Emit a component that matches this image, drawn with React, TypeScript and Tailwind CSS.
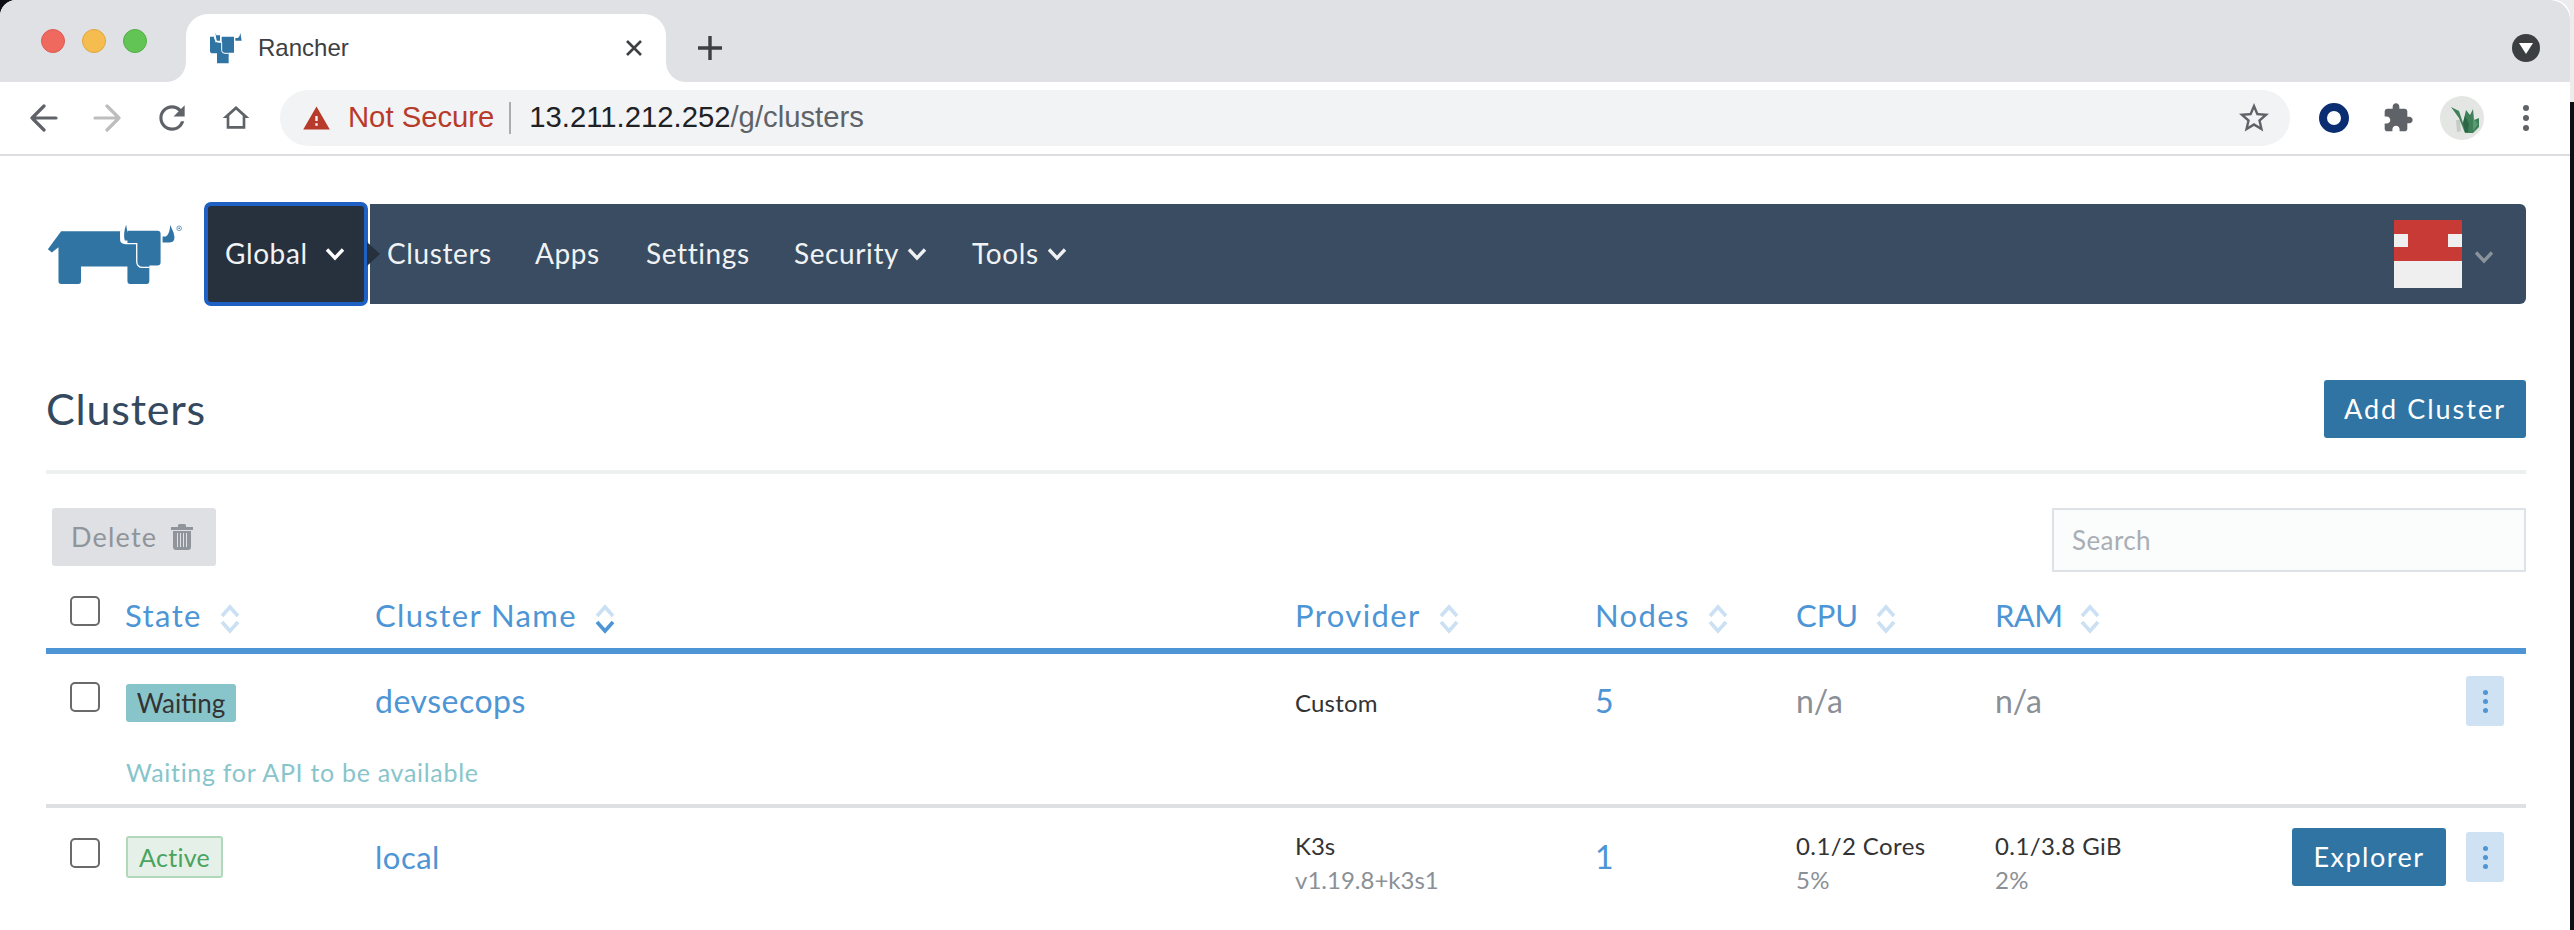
import React from "react";

const ROW = "grid grid-cols-[55px_250px_920px_300px_201px_199px_200px_1fr] pl-[24px] pr-[22px] items-center";

function Sort({ strong = false }: { strong?: boolean }) {
  return (
    <svg width="22" height="32" viewBox="0 0 22 32" fill="none" strokeWidth="3.6" className="mt-2 ml-[17px] shrink-0">
      <path d="M3 13 L11 4 L19 13" stroke="#cbe0f3" />
      <path d="M3 19 L11 28 L19 19" stroke={strong ? "#4d95d5" : "#cbe0f3"} />
    </svg>
  );
}

function Head({ label, strong, tracking = "tracking-[1.4px]" }: { label: string; strong?: boolean; tracking?: string }) {
  return (
    <div className={`flex items-center mb-2 text-[31px] leading-[36px] text-[#4d95d5] ${tracking}`}>
      <span>{label}</span>
      <Sort strong={strong} />
    </div>
  );
}

function Box({ className = "mb-2" }: { className?: string }) {
  return <div className={`w-[30px] h-[30px] rounded-[5px] border-2 border-[#6a6a6a] bg-white ${className}`} />;
}

function Kebab() {
  return (
    <button className="w-[38px] h-[50px] rounded-[3px] bg-[#cfe2f3] flex flex-col items-center justify-center gap-[4px] shrink-0">
      <span className="w-[5px] h-[5px] rounded-full bg-[#4d95d5]" />
      <span className="w-[5px] h-[5px] rounded-full bg-[#4d95d5]" />
      <span className="w-[5px] h-[5px] rounded-full bg-[#4d95d5]" />
    </button>
  );
}

function Chev({ color = "#eef0f2", w = 20 }: { color?: string; w?: number }) {
  return (
    <svg width={w} height="14" viewBox="0 0 20 14" fill="none" stroke={color} strokeWidth="3.4" className="shrink-0">
      <path d="M2 2.5 L10 11 L18 2.5" />
    </svg>
  );
}

function Cow() {
  return (
    <svg width="137" height="61" viewBox="50 100 412 184" className="shrink-0">
      <path fill="#3074a4" d="M92 122 H270 V150 Q272 160 284 160 H292 V120 H382 Q392 120 392 130 V215 Q392 225 382 225 H358 V272 Q358 281 350 281 H300 Q292 281 292 272 V228 H152 V272 Q152 281 144 281 H92 Q84 281 84 272 V170 L64 186 L52 176 Z" />
      <path fill="#3074a4" d="M288 102 Q278 130 284 150 H300 V125 H292 Z" />
      <path fill="none" stroke="#fff" strokeWidth="4" d="M272 124 Q270 158 286 159 H322 M320 160 V212 Q320 230 338 231 H358" />
      <path fill="#3074a4" d="M421 103 L431 126 Q440 155 420 156 H398 V138 H408 Q420 130 421 103 Z" />
      <circle cx="448" cy="113" r="7" fill="none" stroke="#3074a4" strokeWidth="2" />
      <circle cx="448" cy="113" r="2.5" fill="#3074a4" />
    </svg>
  );
}

function Favicon() {
  return (
    <svg width="32" height="32" viewBox="120 95 96 94" className="shrink-0">
      <path fill="#3074a4" d="M120 108 H135 L136 125 H155 V108 H192 V156 H176 V188 H141 V158 H128 Q120 158 120 150 Z" />
      <path fill="#3074a4" d="M136 96 L139 104 H150 V120 H140 Z" />
      <path fill="none" stroke="#fff" strokeWidth="3" d="M133 108 Q134 124 150 125 H156 M155 125 V150 Q155 158 165 158 H176" />
      <path fill="#3074a4" d="M211 96 L215 120 H196 V112 H204 Q210 108 211 96 Z" />
    </svg>
  );
}

function Mat({ d, size, color = "#5f6368", evenodd = false }: { d: string; size: number; color?: string; evenodd?: boolean }) {
  return (
    <svg width={size} height={size} viewBox="0 0 24 24" className="shrink-0">
      <path d={d} fill={color} fillRule={evenodd ? "evenodd" : "nonzero"} />
    </svg>
  );
}

function Arrow({ color, flip = false }: { color: string; flip?: boolean }) {
  return (
    <svg width="28" height="28" viewBox="0 0 28 28" fill="none" stroke={color} strokeWidth="3.2" strokeLinecap="round" strokeLinejoin="round" className={flip ? "shrink-0 -scale-x-100" : "shrink-0"}>
      <path d="M26 14 H2 M14 2 L2 14 L14 26" />
    </svg>
  );
}

function Chrome() {
  return (
    <div className="font-['Liberation_Sans',sans-serif]">
      <div className="h-[82px] bg-[#dfe1e5] rounded-tl-[14px] rounded-tr-[20px] flex">
        <div className="w-[186px] pl-[41px] pt-[29px] flex gap-[17px] shrink-0">
          <span className="w-[24px] h-[24px] rounded-full bg-[#f0695f] border border-[#dc5a50]" />
          <span className="w-[24px] h-[24px] rounded-full bg-[#f5bd4f] border border-[#dfa640]" />
          <span className="w-[24px] h-[24px] rounded-full bg-[#61c454] border border-[#55ae49]" />
        </div>
        <div className="relative mt-[14px] w-[480px] h-[68px] bg-white rounded-t-[22px] flex items-center pl-[24px] pr-[24px] shrink-0">
          <div className="absolute bottom-0 -left-5 w-5 h-5 bg-white"><div className="w-full h-full bg-[#dfe1e5] rounded-br-[20px]" /></div>
          <div className="absolute bottom-0 -right-5 w-5 h-5 bg-white"><div className="w-full h-full bg-[#dfe1e5] rounded-bl-[20px]" /></div>
          <Favicon />
          <span className="ml-[16px] text-[24px] text-[#3c4043] grow">Rancher</span>
          <svg width="16" height="16" viewBox="0 0 16 16" stroke="#3c4043" strokeWidth="2.6" className="shrink-0"><path d="M1 1 L15 15 M15 1 L1 15" /></svg>
        </div>
        <div className="ml-[32px] mt-[14px] h-[68px] flex items-center shrink-0">
          <svg width="24" height="24" viewBox="0 0 24 24" stroke="#3c4043" strokeWidth="3.4"><path d="M12 0 V24 M0 12 H24" /></svg>
        </div>
        <div className="ml-auto mr-[30px] pt-[34px] shrink-0">
          <div className="w-[28px] h-[28px] rounded-full bg-[#3c3f41] flex items-center justify-center">
            <svg width="14" height="11" viewBox="0 0 14 11"><path d="M0 0 H14 L7 11 Z" fill="#fff" /></svg>
          </div>
        </div>
      </div>
      <div className="h-[74px] bg-white border-b-2 border-[#dcdde0] flex items-center pl-[30px]">
        <Arrow color="#5f6368" />
        <div className="ml-[35px]"><Arrow color="#bdbdbd" flip /></div>
        <div className="ml-[32px]">
          <Mat size={38} d="M17.65 6.35A7.958 7.958 0 0 0 12 4c-4.42 0-7.99 3.58-7.99 8s3.57 8 7.99 8c3.73 0 6.84-2.55 7.73-6h-2.08A5.99 5.99 0 0 1 12 18c-3.31 0-6-2.69-6-6s2.69-6 6-6c1.66 0 3.14.69 4.22 1.78L13 11h7V4l-2.35 2.35z" />
        </div>
        <div className="ml-[29px]">
          <Mat size={32} evenodd d="M12 3 L2 12 H5 V20 H19 V12 H22 Z M12 5.8 L17 10.3 V18 H7 V10.3 Z" />
        </div>
        <div className="ml-[28px] w-[2010px] h-[56px] rounded-full bg-[#f1f3f4] flex items-center pl-[22px] pr-[18px] shrink-0">
          <Mat size={29} color="#b83a2b" d="M1 21h22L12 2 1 21zm12-3h-2v-2h2v2zm0-4h-2v-4h2v4z" />
          <span className="ml-[17px] text-[29.25px] text-[#b83a2b]">Not Secure</span>
          <span className="ml-[15px] w-[2px] h-[32px] bg-[#a9acb0]" />
          <span className="ml-[18px] text-[29.25px] text-[#202124]">13.211.212.252<span className="text-[#5f6368]">/g/clusters</span></span>
          <div className="ml-auto"><Mat size={36} d="M22 9.24l-7.19-.62L12 2 9.19 8.63 2 9.24l5.46 4.73L5.82 21 12 17.27 18.18 21l-1.63-7.03L22 9.24zM12 15.4l-3.76 2.27 1-4.28-3.32-2.88 4.38-.38L12 6.1l1.71 4.04 4.38.38-3.32 2.88 1 4.28L12 15.4z" /></div>
        </div>
        <div className="ml-[22px] w-[44px] flex justify-center shrink-0">
          <div className="w-[30px] h-[30px] rounded-full border-[8px] border-[#0b2e73]" />
        </div>
        <div className="ml-[20px] w-[44px] flex justify-center shrink-0">
          <Mat size={32} d="M20.5 11H19V7c0-1.1-.9-2-2-2h-4V3.5C13 2.12 11.88 1 10.5 1S8 2.12 8 3.5V5H4c-1.1 0-1.99.9-1.99 2v3.8H3.5c1.49 0 2.7 1.21 2.7 2.7s-1.21 2.7-2.7 2.7H2V20c0 1.1.9 2 2 2h3.8v-1.5c0-1.49 1.21-2.7 2.7-2.7 1.49 0 2.7 1.21 2.7 2.7V22H17c1.1 0 2-.9 2-2v-4h1.5c1.38 0 2.5-1.12 2.5-2.5S21.88 11 20.5 11z" />
        </div>
        <div className="ml-[20px] w-[44px] h-[44px] rounded-full bg-[#e4e6e3] shrink-0">
          <svg width="44" height="44" viewBox="0 0 44 44">
            <path d="M16 24 L20 24 L21 35 L17 36 Z" fill="#c6cac6" />
            <path d="M11 11 L19 15 L23 27 L26 14 L30 19 L33 13 L34 24 L39 22 L39 31 L33 37 L25 37 L19 22 Z" fill="#3f8058" />
            <path d="M25 20 L29 28 L28 36 L25 36 L23 27 Z" fill="#2b6647" />
            <path d="M33 22 L38 28 L33 35 Z" fill="#5a9a74" />
          </svg>
        </div>
        <div className="ml-[20px] w-[44px] flex flex-col items-center gap-[4px] shrink-0">
          <span className="w-[6px] h-[6px] rounded-full bg-[#5f6368]" />
          <span className="w-[6px] h-[6px] rounded-full bg-[#5f6368]" />
          <span className="w-[6px] h-[6px] rounded-full bg-[#5f6368]" />
        </div>
      </div>
    </div>
  );
}

function Nav() {
  const item = "text-[28px] text-[#f0f2f4] tracking-[0.6px] mb-[3px]";
  return (
    <div className="flex items-center h-[104px] mt-[46px] pl-[47px] pr-[44px]">
      <div className="w-[157px] shrink-0"><Cow /></div>
      <div className="w-[164px] h-[104px] shrink-0 rounded-[7px] border-4 border-[#1f60c4] bg-[#27313e] flex items-center pl-[17px]">
        <span className={`${item} w-[100px]`}>Global</span>
        <Chev color="#ffffff" />
      </div>
      <div className="relative ml-[2px] grow h-[100px] bg-[#394c61] rounded-r-[6px] flex items-center pl-[17px]">
        <svg width="14" height="24" viewBox="0 0 14 24" className="absolute -left-[3px] top-[38px]"><path d="M0 0 L13 12 L0 24 Z" fill="#27313e" /></svg>
        <span className={`${item} w-[148px] shrink-0`}>Clusters</span>
        <span className={`${item} w-[111px] shrink-0`}>Apps</span>
        <span className={`${item} w-[148px] shrink-0`}>Settings</span>
        <span className={`${item} w-[113px] shrink-0`}>Security</span>
        <Chev />
        <span className={`${item} ml-[45px] w-[75px] shrink-0`}>Tools</span>
        <Chev />
        <div className="ml-auto mr-[12px] w-[68px] h-[68px] grid grid-cols-5 grid-rows-5 shrink-0">
          <div className="col-span-5 bg-[#c83a35]" />
          <div className="bg-[#efefef]" />
          <div className="col-span-3 bg-[#c83a35]" />
          <div className="bg-[#efefef]" />
          <div className="col-span-5 bg-[#c83a35]" />
          <div className="col-span-5 row-span-2 bg-[#efefef]" />
        </div>
        <div className="mr-[32px] mt-[6px]"><Chev color="#8a939c" /></div>
      </div>
    </div>
  );
}

function Main() {
  return (
    <div className="pl-[46px] pr-[44px]">
      <div className="mt-[74px] flex items-center justify-between h-[58px]">
        <h1 className="text-[43px] leading-[48px] text-[#34495e] tracking-[0.8px]">Clusters</h1>
        <button className="w-[202px] h-[58px] rounded-[3px] bg-[#3074a4] text-white text-[27px] tracking-[2px]">Add Cluster</button>
      </div>
      <div className="mt-[32px] h-[4px] bg-[#edf0f0]" />
      <div className="mt-[34px] pl-[6px] flex justify-between items-start">
        <button className="w-[164px] h-[58px] rounded-[3px] bg-[#dfe0e3] text-[#8f959b] text-[27px] tracking-[1.2px] flex items-center pl-[19px] gap-[14px]">
          <span>Delete</span>
          <svg width="22" height="26" viewBox="0 0 22 26" fill="#8f959b">
            <path d="M7 3 V1.5 Q7 0 8.5 0 H13.5 Q15 0 15 1.5 V3 H22 V6 H0 V3 Z" />
            <path fillRule="evenodd" d="M2 7 H20 V23 Q20 26 17 26 H5 Q2 26 2 23 Z M6 9 V23 H7 V9 Z M9 9 V23 H10 V9 Z M12 9 V23 H13 V9 Z M15 9 V23 H16 V9 Z" />
          </svg>
        </button>
        <div className="w-[474px] h-[64px] border-2 border-[#dde2e6] bg-[#fbfcfc] flex items-center pl-[18px] text-[26px] text-[#a9aeb4] tracking-[0.4px]">Search</div>
      </div>
      <div className={`${ROW} mt-[18px] h-[58px]`}>
        <Box className="mb-4" />
        <Head label="State" />
        <Head label="Cluster Name" strong />
        <Head label="Provider" />
        <Head label="Nodes" />
        <Head label="CPU" tracking="tracking-[0px]" />
        <Head label="RAM" tracking="tracking-[-0.6px]" />
      </div>
      <div className="h-[6px] bg-[#4d95d5]" />
      <div className="border-b-4 border-[#dfe0e2] pt-[22px]">
        <div className={`${ROW} h-[50px]`}>
          <Box />
          <div className="flex mt-1"><span className="ml-px w-[110px] h-[38px] text-center rounded-[3px] bg-[#88c5cb] text-[#333] text-[26px] leading-[38px]">Waiting</span></div>
          <div className="text-[32px] text-[#4d95d5] tracking-[0.5px]">devsecops</div>
          <div className="text-[24px] text-[#333] tracking-[0.2px] mt-1">Custom</div>
          <div className="text-[32px] text-[#4d95d5]">5</div>
          <div className="text-[32px] text-[#8b9096]">n/a</div>
          <div className="text-[32px] text-[#8b9096]">n/a</div>
          <div className="flex justify-end"><Kebab /></div>
        </div>
        <div className="mt-[30px] mb-[16px] pl-[80px] text-[25px] leading-[32px] text-[#88c5cb] tracking-[0.7px]">Waiting for API to be available</div>
      </div>
      <div className={`${ROW} pt-[20px] h-[78px]`}>
        <Box />
        <div className="flex"><span className="ml-px h-[42px] px-[11px] rounded-[3px] bg-[#e5f1e8] border-2 border-[#b0d9bb] text-[#4aa35e] text-[25px] leading-[38px] tracking-[0.3px]">Active</span></div>
        <div className="text-[31px] text-[#4d95d5] tracking-[0.5px]">local</div>
        <div className="text-[24px] leading-[34px] text-[#333] mt-px -mb-[11px]">K3s<div className="text-[#8b9096]">v1.19.8+k3s1</div></div>
        <div className="text-[32px] text-[#4d95d5]">1</div>
        <div className="text-[24px] leading-[34px] text-[#333] tracking-[0.4px] mt-px -mb-[11px]">0.1/2 Cores<div className="text-[#8b9096]">5%</div></div>
        <div className="text-[24px] leading-[34px] text-[#333] tracking-[0.4px] mt-px -mb-[11px]">0.1/3.8 GiB<div className="text-[#8b9096]">2%</div></div>
        <div className="flex justify-end items-center gap-[20px]">
          <button className="w-[154px] h-[58px] rounded-[3px] bg-[#3074a4] text-white text-[27px] tracking-[1.5px]">Explorer</button>
          <Kebab />
        </div>
      </div>
    </div>
  );
}

export default function App() {
  return (
    <div className="w-[2574px] h-[930px] overflow-hidden flex font-['Lato',sans-serif] bg-[linear-gradient(90deg,#0e0e16_50%,#ececec_50%)]">
      <div className="w-[2570px] h-[930px] shrink-0 overflow-hidden rounded-t-[16px] bg-white">
        <Chrome />
        <Nav />
        <Main />
      </div>
      <div className="w-[4px] flex flex-col">
        <div className="h-[102px] bg-[#ececec]" />
        <div className="grow bg-[#0e0e16]" />
      </div>
    </div>
  );
}
